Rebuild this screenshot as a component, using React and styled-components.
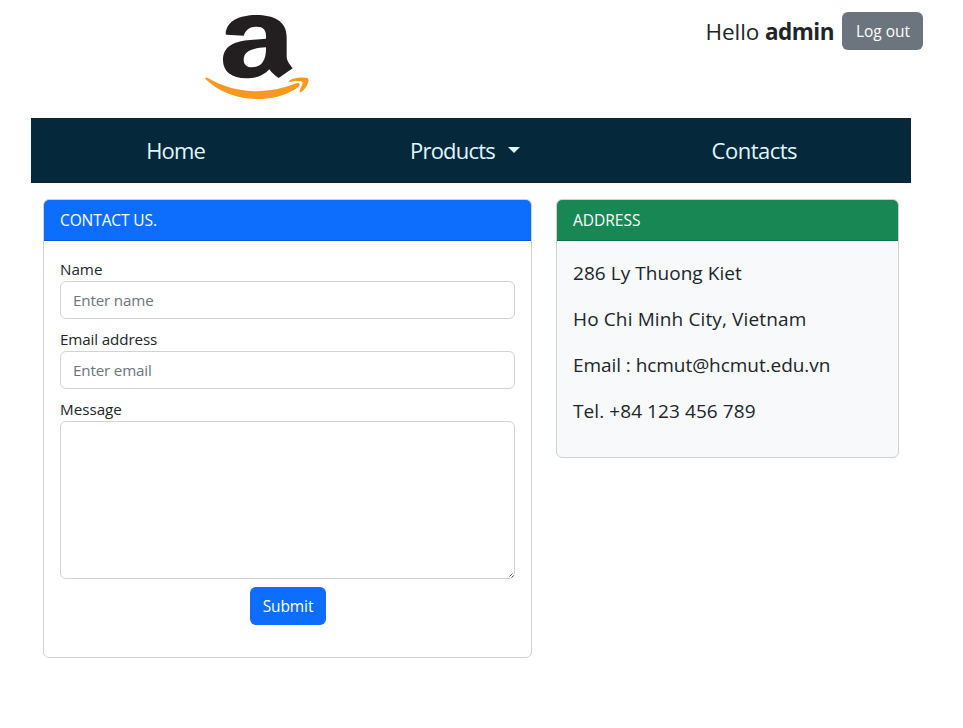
import React from "react";
import styled, { createGlobalStyle } from "styled-components";

const GlobalStyle = createGlobalStyle`
  *, *::before, *::after { box-sizing: border-box; }
  body {
    margin: 0;
    background: #fff;
    color: #212529;
    font: 400 16px/24px "Segoe UI", "Open Sans", "Noto Sans", sans-serif;
    overflow: hidden;
  }
`;

const Page = styled.div`
  width: 963px;
  height: 728px;
  padding-left: 31px;
`;

const Header = styled.header`
  display: flex;
  justify-content: space-between;
  width: 892px;
  height: 118px;
`;

const Logo = styled.svg`
  width: 130px;
  height: 110px;
  margin-left: 159px;
`;

const Fit = styled.span`
  display: inline-block;
  white-space: pre;
  letter-spacing: ${(p) => p.$track || 0}px;
`;

const Account = styled.div`
  display: flex;
  align-items: center;
  height: 38px;
  margin-top: 12px;
  gap: 8px;
`;

const Greeting = styled.p`
  margin: 0;
  padding-top: 2px;
  font-size: 22.5px;
  font-weight: 400;
  line-height: 36px;
  white-space: pre;
  b { font-weight: 700; }
`;

const Button = styled.button`
  width: ${(p) => p.$width}px;
  height: 38px;
  padding: 0 0 0 1px;
  border: 0;
  border-radius: 6px;
  background: ${(p) => p.$color};
  color: #fff;
  font: inherit;
  font-size: 15.5px;
  white-space: nowrap;
`;

const Nav = styled.nav`
  display: grid;
  grid-template-columns: repeat(3, 1fr);
  align-items: center;
  width: 880px;
  height: 65px;
  padding: 0 12px 1px 0;
  background: #05283b;
`;

const NavLink = styled.a`
  display: flex;
  align-items: center;
  justify-content: center;
  color: #e0f7ff;
  font-size: 22px;
  line-height: 36px;
`;

const Caret = styled.span`
  margin: -1px 0 0 13px;
  border-top: 6.5px solid;
  border-right: 6.5px solid transparent;
  border-left: 6.5px solid transparent;
`;

const Columns = styled.main`
  display: grid;
  grid-template-columns: 489px 343px;
  column-gap: 24px;
  align-items: start;
  padding: 16px 0 0 12px;
`;

const Card = styled.section`
  height: ${(p) => p.$height}px;
  border: 1px solid #d0d1d2;
  border-radius: 6px;
  background: ${(p) => p.$fill};
  overflow: hidden;
`;

const CardHeader = styled.h2`
  height: 41px;
  margin: 0;
  padding: 8px 16px;
  border-bottom: 1px solid rgba(0, 0, 0, 0.176);
  background: ${(p) => p.$color};
  color: #fff;
  font-size: 15.5px;
  font-weight: 400;
  line-height: 24px;
`;

const Form = styled.form`
  display: flex;
  flex-direction: column;
  padding: 16px;
`;

const Field = styled.label`
  display: flex;
  flex-direction: column;
  margin-bottom: 8px;
  font-size: 15.2px;
`;

const Input = styled.input`
  height: 38px;
  padding: 6px 12px;
  border: 1px solid #ced4da;
  border-radius: 6px;
  font: inherit;
  letter-spacing: -0.17px;
  &::placeholder { color: #6c757d; opacity: 1; }
`;

const MessageBox = styled.div`
  position: relative;
  display: flex;
`;

const TextArea = styled.textarea`
  flex: 1;
  height: 158px;
  border: 1px solid #ced4da;
  border-radius: 6px;
  font: inherit;
  resize: none;
`;

const Grip = styled.svg`
  position: absolute;
  right: 1px;
  bottom: 1px;
  width: 5px;
  height: 5px;
`;

const Actions = styled.div`
  display: flex;
  justify-content: center;
`;

const Address = styled.address`
  display: flex;
  flex-direction: column;
  gap: 16px;
  padding: 17px 16px;
  font-size: 19px;
  font-style: normal;
  font-weight: 400;
  line-height: 30px;
`;

export default function App() {
  return (
    <Page>
      <GlobalStyle />
      <Header>
        <Logo viewBox="0 0 390 330" role="img" aria-label="Amazon">
          <path
            fill="#231f20"
            fillRule="evenodd"
            d="M107 101C110 62 150 45 199 45C250 45 290 62 290 112L290 168C290 185 300 193 308 205L266 234C252 225 244 217 238 208C222 226 200 235 168 235C126 235 99 215 99 181C99 140 130 126 172 121L228 116C230 92 222 80 200 80C180 80 168 88 161 107L110 104Q107 104 107 101ZM228 142C190 144 161 152 161 180C161 195 172 202 186 202C214 202 229 182 228 142Z"
          />
          <path
            fill="#f8991d"
            d="M47 238C44 233 50 231 55 235C135 282 230 285 319 250C328 247 333 254 326 260C290 288 240 297 200 297C140 297 85 275 47 238Z"
          />
          <path
            fill="#f8991d"
            d="M297 242C310 233 335 230 353 234C360 240 352 262 335 275C330 279 327 275 330 269C335 257 340 248 336 245C330 241 312 244 301 245C296 246 294 245 297 242Z"
          />
        </Logo>
        <Account>
          <Greeting>
            <Fit $track={-0.1}>Hello </Fit>
            <b><Fit $track={-0.5}>admin</Fit></b>
          </Greeting>
          <Button $width={81} $color="#6c757d">
            <Fit>Log out</Fit>
          </Button>
        </Account>
      </Header>
      <Nav>
        <NavLink><Fit $track={-0.8}>Home</Fit></NavLink>
        <NavLink><Fit $track={-0.8}>Products</Fit><Caret /></NavLink>
        <NavLink><Fit $track={-0.5}>Contacts</Fit></NavLink>
      </Nav>
      <Columns>
        <Card $height={459} $fill="#fff">
          <CardHeader $color="#0d6efd"><Fit $track={-0.1}>CONTACT US.</Fit></CardHeader>
          <Form>
            <Field><Fit>Name</Fit><Input placeholder="Enter name" /></Field>
            <Field><Fit $track={-0.13}>Email address</Fit><Input placeholder="Enter email" /></Field>
            <Field>
              <Fit>Message</Fit>
              <MessageBox>
                <TextArea />
                <Grip viewBox="0 0 5 5" aria-hidden="true">
                  <path d="M0.5 3.5L3.5 0.5M2.5 4.5L4.5 2.5" stroke="#555" fill="none" />
                </Grip>
              </MessageBox>
            </Field>
            <Actions>
              <Button type="button" $width={76} $color="#0d6efd"><Fit $track={-0.1}>Submit</Fit></Button>
            </Actions>
          </Form>
        </Card>
        <Card $height={259} $fill="#f8f9fa">
          <CardHeader $color="#198754"><Fit>ADDRESS</Fit></CardHeader>
          <Address>
            <Fit $track={0.05}>286 Ly Thuong Kiet</Fit>
            <Fit $track={0.13}>Ho Chi Minh City, Vietnam</Fit>
            <Fit $track={-0.06}>Email : hcmut@hcmut.edu.vn</Fit>
            <Fit $track={0.08}>Tel. +84 123 456 789</Fit>
          </Address>
        </Card>
      </Columns>
    </Page>
  );
}
